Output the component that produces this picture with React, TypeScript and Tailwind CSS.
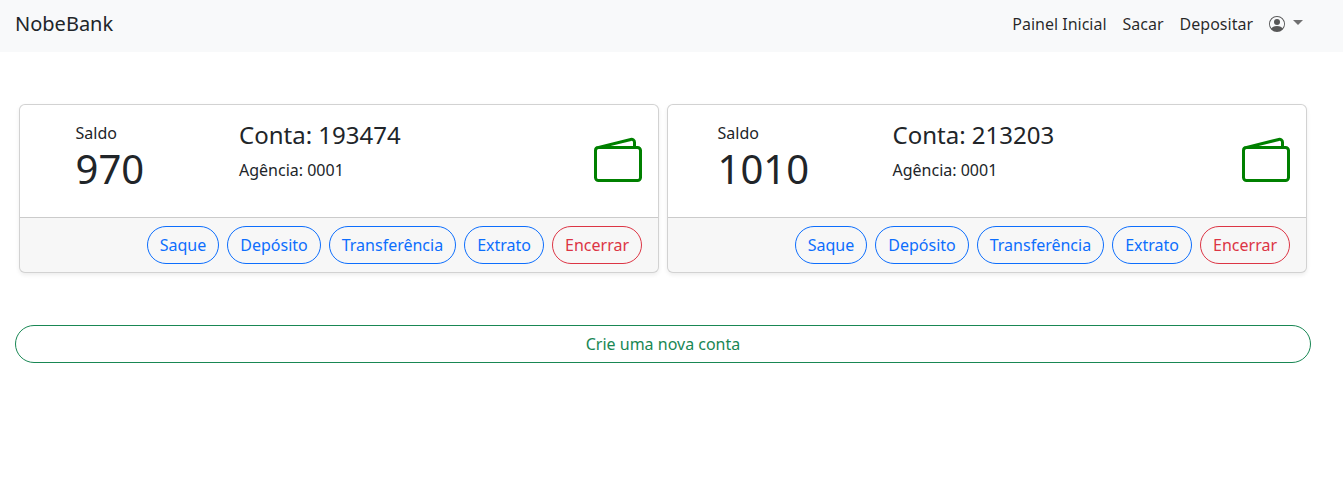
const accounts = [
  { saldo: 970, conta: 193474, saldoClass: "ml-[39.5px] w-[163.5px]" },
  { saldo: 1010, conta: 213203, saldoClass: "ml-[33.5px] w-[175px]" },
];

const actions = ["Saque", "Depósito", "Transferência", "Extrato"];

function WalletIcon() {
  return (
    <svg width="48" height="48" viewBox="0 0 16 16" fill="#008000" className="mt-4 ml-auto shrink-0">
      <path d="M12.136.326A1.5 1.5 0 0 1 14 1.78V3h.5A1.5 1.5 0 0 1 16 4.5v9a1.5 1.5 0 0 1-1.5 1.5h-13A1.5 1.5 0 0 1 0 13.5v-9a1.5 1.5 0 0 1 1.432-1.499L12.136.326zM5.562 3H13V1.78a.5.5 0 0 0-.621-.484L5.562 3zM1.5 4a.5.5 0 0 0-.5.5v9a.5.5 0 0 0 .5.5h13a.5.5 0 0 0 .5-.5v-9a.5.5 0 0 0-.5-.5h-13z" />
    </svg>
  );
}

function PersonIcon() {
  return (
    <svg width="16" height="16" viewBox="0 0 16 16" fill="currentColor">
      <path d="M11 6a3 3 0 1 1-6 0 3 3 0 0 1 6 0z" />
      <path
        fillRule="evenodd"
        d="M0 8a8 8 0 1 1 16 0A8 8 0 0 1 0 8zm8-7a7 7 0 0 0-5.468 11.37C3.242 11.226 4.805 10 8 10s4.757 1.225 5.468 2.37A7 7 0 0 0 8 1z"
      />
    </svg>
  );
}

function AccountCard({ saldo, conta, saldoClass }: (typeof accounts)[number]) {
  return (
    <div className="overflow-hidden rounded-md border border-black/[0.176] bg-white shadow-[0_2px_4px_rgba(0,0,0,0.075)]">
      <div className="flex h-[112px] p-4">
        <div className={saldoClass}>
          <p className="leading-6">Saldo</p>
          <p className="text-[40px] leading-[48px]">{saldo}</p>
        </div>
        <div>
          <h4 className="text-2xl leading-[28px]">Conta: {conta}</h4>
          <p className="mt-[9px] leading-6">Agência: 0001</p>
        </div>
        <WalletIcon />
      </div>
      <div className="flex justify-end gap-2 border-t border-black/[0.176] bg-black/[0.03] px-4 py-2">
        {actions.map((action) => (
          <button
            key={action}
            className="h-[38px] rounded-full border border-[#0d6efd] px-3 leading-6 text-[#0d6efd]"
          >
            {action}
          </button>
        ))}
        <button className="h-[38px] rounded-full border border-[#dc3545] px-3 leading-6 text-[#dc3545]">
          Encerrar
        </button>
      </div>
    </div>
  );
}

export default function App() {
  return (
    <div className="min-h-[478px] bg-white font-['Noto_Sans',sans-serif] text-base text-[#212529]">
      <nav className="flex h-[52px] items-center justify-between bg-[#f8f9fa] pr-10 pb-1 pl-[15px]">
        <span className="text-xl">NobeBank</span>
        <div className="flex items-center gap-4 text-black/[0.85]">
          <a>Painel Inicial</a>
          <a>Sacar</a>
          <a>Depositar</a>
          <div className="flex items-center gap-2 text-black/[0.65]">
            <PersonIcon />
            <span className="mb-[3px] h-0 w-0 border-x-[5px] border-t-[5px] border-x-transparent border-t-black/[0.55]" />
          </div>
        </div>
      </nav>
      <main className="pt-[52px] pr-8 pl-[15px]">
        <div className="grid grid-cols-2 gap-2 px-1">
          {accounts.map((account) => (
            <AccountCard key={account.conta} {...account} />
          ))}
        </div>
        <button className="mt-[52px] h-[38px] w-full rounded-full border border-[#198754] px-3 leading-6 text-[#198754]">
          Crie uma nova conta
        </button>
      </main>
    </div>
  );
}
